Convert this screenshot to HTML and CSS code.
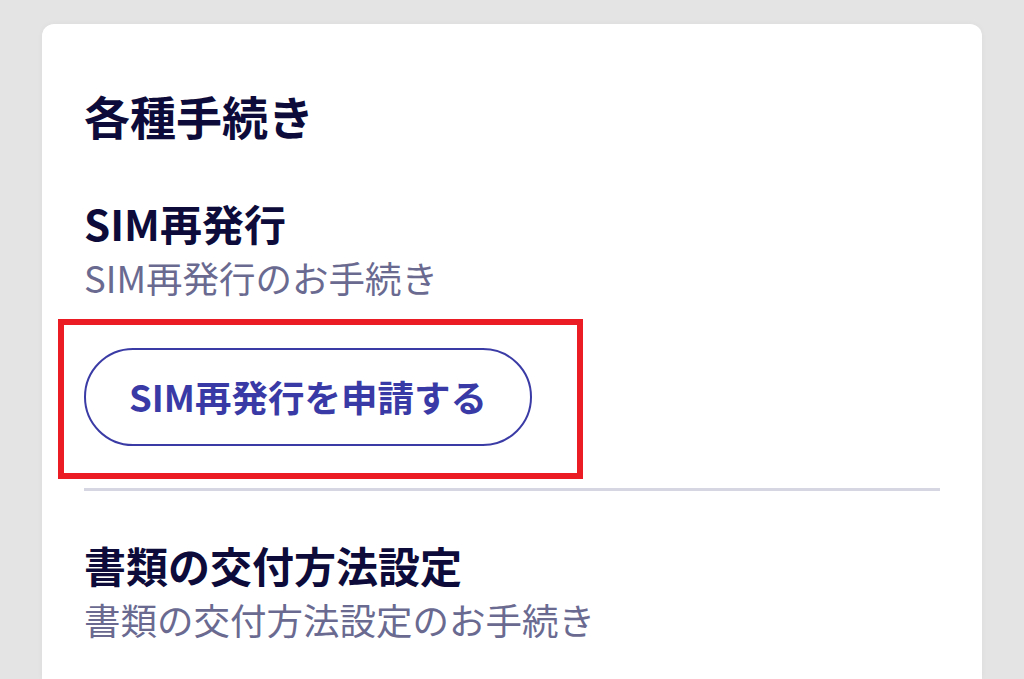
FILE: index.html
```html
<html>
<head>
	<meta http-equiv="content-type" content="text/html;charset=utf-8">
	<title>各種手続き</title>
	<link rel="stylesheet" href="styles.css">
</head>
<body>
	<div class="card">
		<h1 class="title">各種手続き</h1>

		<div class="item">
			<h2 class="item-name">SIM再発行</h2>
			<p class="item-desc">SIM再発行のお手続き</p>
			<div class="action">
				<a class="btn">SIM再発行を申請する</a>
				<span class="mark"></span>
			</div>
		</div>

		<hr class="line">

		<div class="item">
			<h2 class="item-name">書類の交付方法設定</h2>
			<p class="item-desc">書類の交付方法設定のお手続き</p>
		</div>
	</div>
</body>
</html>
```

FILE: styles.css
```css
html, body{
	height:100%;
}
body{
	margin:0;
	padding:24px 42px 0;
	background:#e4e4e4;
	box-sizing:border-box;
	overflow:hidden;
	display:flex;
	flex-direction:column;
	font-family:"Noto Sans CJK JP", "Noto Sans", sans-serif;
}

.card{
	flex:1;
	background:#fff;
	border-radius:12px 12px 0 0;
	padding:68px 42px 0;
	box-shadow:0 0 6px rgba(0,0,0,0.04);
}

.title{
	margin:0;
	font-size:46px;
	line-height:1;
	font-weight:700;
	color:#0d0b3a;
}

.item{
	display:flex;
	flex-direction:column;
	align-items:flex-start;
}
.item-name{
	margin:64px 0 0;
	font-size:42px;
	line-height:1;
	font-weight:700;
	color:#0d0b3a;
}
.item-desc{
	margin:16px 0 0;
	font-size:36.5px;
	line-height:1;
	font-weight:400;
	color:#6a6a91;
}

.action{
	position:relative;
	margin-top:51px;
}
.btn{
	display:flex;
	align-items:center;
	justify-content:center;
	width:448px;
	height:98px;
	box-sizing:border-box;
	border:2px solid #3b3ba6;
	border-radius:49px;
	font-size:36.5px;
	font-weight:700;
	color:#3a3aa6;
}
/* 赤い囲み */
.mark{
	position:absolute;
	left:-26px;
	top:-29px;
	right:-51px;
	bottom:-33px;
	border:6px solid #ec1c24;
}

.line{
	margin:42px 0 0;
	border:0;
	height:3px;
	background:#d6d6e3;
}
.line + .item .item-name{
	margin-top:53px;
}
```
